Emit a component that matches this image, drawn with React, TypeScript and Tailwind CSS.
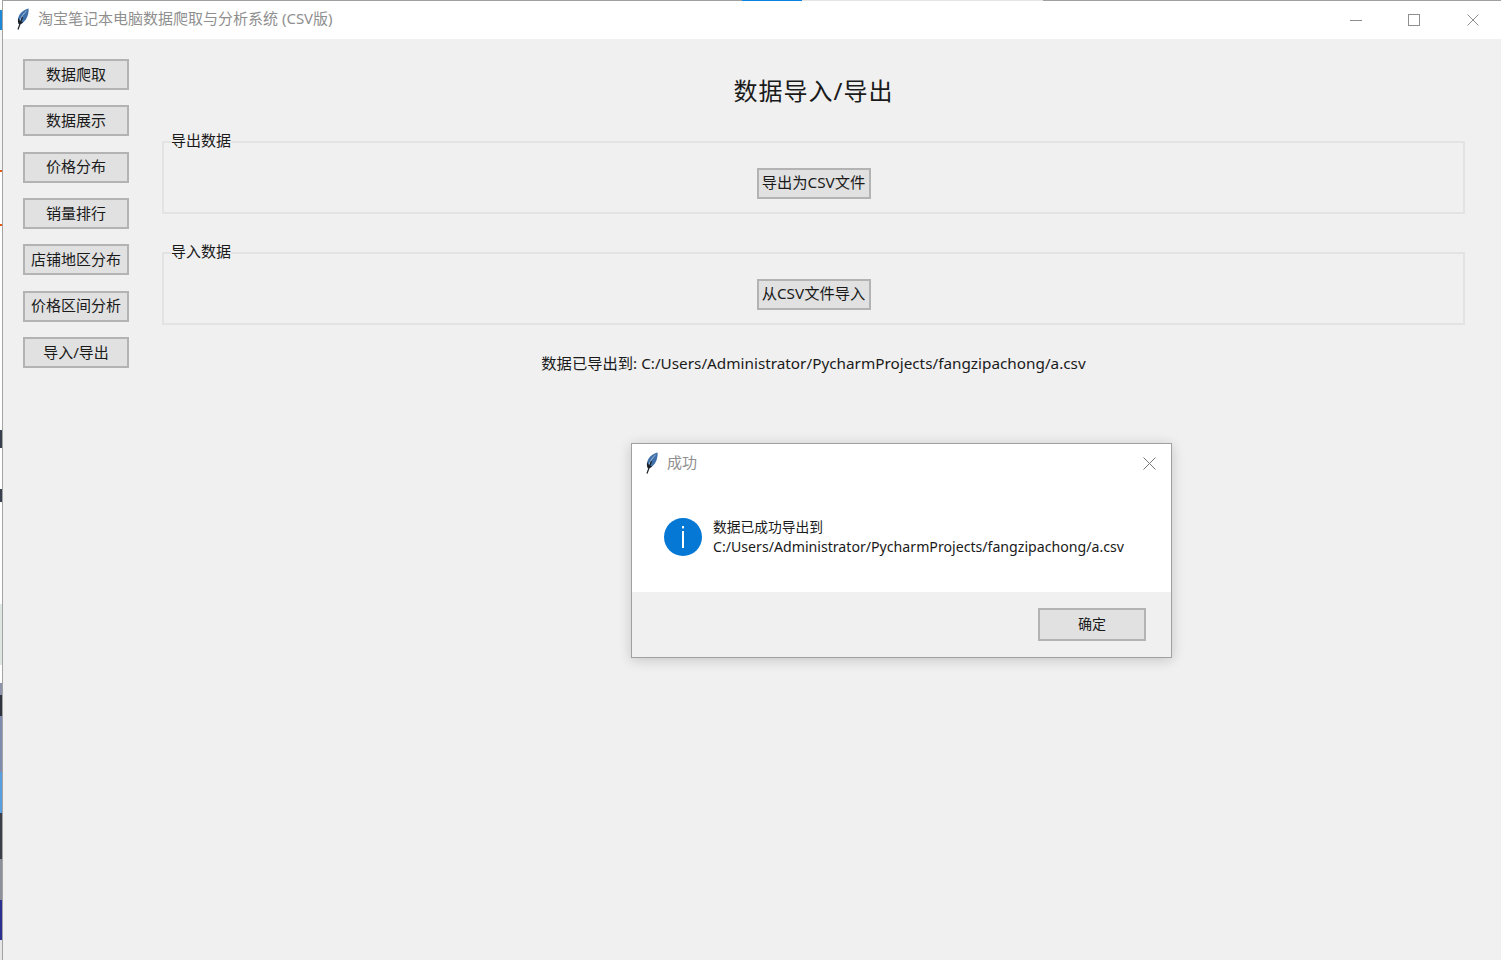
import React from 'react';

const navItems = ['数据爬取', '数据展示', '价格分布', '销量排行', '店铺地区分布', '价格区间分析', '导入/导出'];

const Feather: React.FC = () => (
   <svg width="14" height="22" viewBox="0 0 14 22" fill="none">
      <path d="M12.5 0.5C8 1.5 3.5 5 2.2 10C1.6 12.5 2 15 3.2 16.5C7.5 15.5 11 11 12 6.5C12.6 4 12.8 2 12.5 0.5Z" fill="#3f6fa8" />
      <path d="M10.5 3C7.5 5.5 5 9 4 13" stroke="#a9c6e6" strokeWidth="1" />
      <path d="M2.2 10C1.6 12.5 2 15 3.2 16.5C4.6 16.2 6 15.4 7.2 14.3C5 14.2 3 12.6 2.2 10Z" fill="#1c2026" />
      <path d="M6.5 9L2 21.5" stroke="#1c2026" strokeWidth="1.2" />
   </svg>
);

const CloseIcon: React.FC<{ size: number; color: string }> = ({ size, color }) => (
   <svg width={size} height={size} viewBox={`0 0 ${size} ${size}`}>
      <path d={`M0.5 0.5L${size - 0.5} ${size - 0.5}M${size - 0.5} 0.5L0.5 ${size - 0.5}`} stroke={color} strokeWidth="1" />
   </svg>
);

const TkButton: React.FC<{ label: string; className: string }> = ({ label, className }) => (
   <button
      type="button"
      className={`flex items-center justify-center bg-[#e1e1e1] border-2 border-[#b3b3b3] text-[#1a1a1a] whitespace-nowrap ${className}`}
   >
      {label}
   </button>
);

const Group: React.FC<{ title: string; action: string }> = ({ title, action }) => (
   <fieldset className="h-[84px] border-2 border-[#e3e3e3]">
      <legend className="ml-[7px] pb-[4px] text-[15px] leading-[20px] text-[#1a1a1a]">{title}</legend>
      <div className="flex justify-center pt-[14px]">
         <TkButton label={action} className="w-[114px] h-[31px] pb-[2px] text-[15.3px]" />
      </div>
   </fieldset>
);

const App: React.FC = () => {
   return (
      <div className="flex w-[1501px] h-[960px] overflow-hidden bg-[#f0f0f0] font-['Noto_Sans','Noto_Sans_CJK_SC',sans-serif]">
         {/* sliver of the desktop behind the window */}
         <div className="flex flex-col w-[2px] h-full bg-white">
            <div className="h-[10px]" />
            <div className="h-[20px] bg-[#1e88d8]" />
            <div className="h-[140px] bg-[#f5f5f5]" />
            <div className="h-[2px] bg-[#e8590c]" />
            <div className="h-[52px]" />
            <div className="h-[2px] bg-[#e8590c]" />
            <div className="h-[204px]" />
            <div className="h-[18px] bg-[#39404d]" />
            <div className="h-[41px]" />
            <div className="h-[13px] bg-[#39404d]" />
            <div className="h-[102px]" />
            <div className="h-[61px] bg-[#dde6e0]" />
            <div className="h-[18px]" />
            <div className="h-[12px] bg-[#8d93ab]" />
            <div className="h-[21px] bg-[#30343f]" />
            <div className="h-[56px] bg-[#7f8cb0]" />
            <div className="h-[41px] bg-[#5aa0e0]" />
            <div className="h-[46px] bg-[#3c3f4a]" />
            <div className="h-[41px] bg-[#8d8f9a]" />
            <div className="h-[40px] bg-[#2b2f8f]" />
            <div className="flex-1 bg-[#e6e6e6]" />
         </div>

         <div className="flex flex-col flex-1 border-l border-[#a3a3a3]">
            <div className="flex h-[1px] bg-[#a0a0a0]">
               <div className="w-[739px]" />
               <div className="w-[60px] bg-[#0a84e0]" />
               <div className="w-[241px] bg-[#e4e4e4]" />
            </div>

            <div className="flex items-center h-[38px] bg-white">
               <div className="flex justify-center w-[14px] ml-[13px] -mt-[2px]">
                  <Feather />
               </div>
               <span className="ml-[8px] pb-[3px] text-[15px] text-[#8f8f8f] whitespace-nowrap">淘宝笔记本电脑数据爬取与分析系统 (CSV版)</span>
               <div className="flex items-center gap-[46px] ml-auto pr-[22px]">
                  <svg width="12" height="12" viewBox="0 0 12 12">
                     <path d="M0 6.5H12" stroke="#8f8f8f" strokeWidth="1" />
                  </svg>
                  <svg width="12" height="12" viewBox="0 0 12 12" className="mr-[1px]">
                     <rect x="0.5" y="0.5" width="11" height="11" fill="none" stroke="#8f8f8f" strokeWidth="1" />
                  </svg>
                  <CloseIcon size={12} color="#8f8f8f" />
               </div>
            </div>

            <div className="relative flex flex-1">
               <nav className="flex flex-col gap-[15.33px] w-[159px] pt-[20px] pl-[20px]">
                  {navItems.map(item => (
                     <TkButton key={item} label={item} className="w-[106px] h-[31px] pb-[1px] text-[15px]" />
                  ))}
               </nav>

               <main className="flex flex-col w-[1303px]">
                  <h1 className="mt-[34px] text-center text-[24px] leading-[36px] tracking-[1px] text-[#1a1a1a]">数据导入/导出</h1>
                  <div className="flex flex-col gap-[26.5px] mt-[21px]">
                     <Group title="导出数据" action="导出为CSV文件" />
                     <Group title="导入数据" action="从CSV文件导入" />
                  </div>
                  <p className="mt-[27px] text-center text-[15.3px] leading-[22px] text-[#1a1a1a]">
                     数据已导出到: C:/Users/Administrator/PycharmProjects/fangzipachong/a.csv
                  </p>
               </main>

               {/* message box */}
               <div className="absolute left-[628px] top-[404px] flex flex-col w-[541px] h-[215px] bg-white border border-[#a0a0a0] shadow-[0_2px_12px_rgba(0,0,0,0.18)]">
                  <div className="flex items-center h-[38px] pl-[13px]">
                     <Feather />
                     <span className="ml-[8px] pb-[2px] text-[15px] text-[#8f8f8f]">成功</span>
                     <div className="ml-auto mr-[15px]">
                        <CloseIcon size={13} color="#777777" />
                     </div>
                  </div>
                  <div className="flex items-center h-[110px] pl-[32px]">
                     <svg width="38" height="38" viewBox="0 0 38 38">
                        <circle cx="19" cy="19" r="19" fill="#0478d4" />
                        <rect x="18" y="8" width="2" height="2.4" fill="#fff" />
                        <rect x="18" y="13" width="2" height="17" fill="#fff" />
                     </svg>
                     <div className="ml-[11px] leading-[20px] text-[#1a1a1a]">
                        <div className="text-[13.75px]">数据已成功导出到</div>
                        <div className="text-[14.15px]">C:/Users/Administrator/PycharmProjects/fangzipachong/a.csv</div>
                     </div>
                  </div>
                  <div className="flex flex-1 justify-end pt-[16px] pr-[25px] bg-[#f0f0f0]">
                     <TkButton label="确定" className="w-[108px] h-[33px] pb-[2px] text-[14px]" />
                  </div>
               </div>
            </div>
         </div>
      </div>
   );
};

export default App;
